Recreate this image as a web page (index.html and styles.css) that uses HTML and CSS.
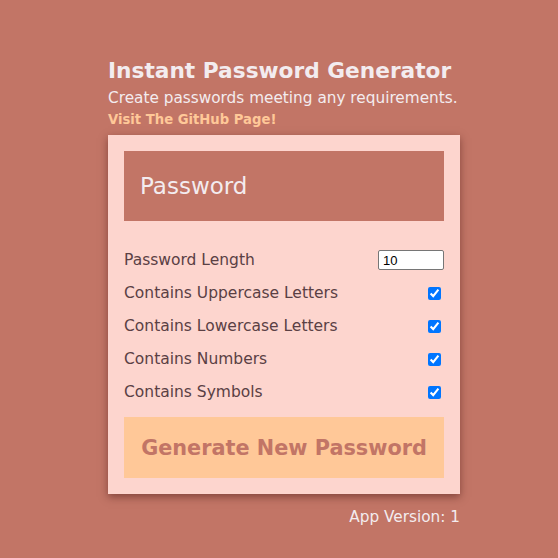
FILE: index.html
```html
<!DOCTYPE html>
<html>
<head>
<meta charset="utf-8">
<link rel="stylesheet" href="styles.css">
</head>
<body>
<main class="app">
  <header class="head">
    <h1 class="title">Instant Password Generator</h1>
    <p class="sub">Create passwords meeting any requirements.</p>
    <a class="link" href="#">Visit The GitHub Page!</a>
  </header>
  <section class="card">
    <div class="output">Password</div>
    <div class="opts">
      <label class="row"><span>Password Length</span><input class="num" type="number" value="10"></label>
      <label class="row"><span>Contains Uppercase Letters</span><input class="chk" type="checkbox" checked></label>
      <label class="row"><span>Contains Lowercase Letters</span><input class="chk" type="checkbox" checked></label>
      <label class="row"><span>Contains Numbers</span><input class="chk" type="checkbox" checked></label>
      <label class="row"><span>Contains Symbols</span><input class="chk" type="checkbox" checked></label>
    </div>
    <button class="gen">Generate New Password</button>
  </section>
  <p class="ver">App Version: 1</p>
</main>
</body>
</html>
```
FILE: styles.css
```css
html, body {
  margin: 0;
  background: #c27566;
  height: 100%;
}
body {
  font-family: "DejaVu Sans", sans-serif;
}
.app {
  width: 352px;
  margin-left: 108px;
  padding-top: 56px;
  display: flex;
  flex-direction: column;
}
.head {
  display: flex;
  flex-direction: column;
}
.title {
  margin: 0;
  font-size: 21.7px;
  font-weight: bold;
  color: #f3ecef;
  line-height: 30px;
  white-space: nowrap;
}
.sub {
  margin: 2px 0 0;
  font-size: 15.3px;
  color: #f3ecef;
  line-height: 20px;
  white-space: nowrap;
}
.link {
  margin-top: 2px;
  font-size: 13.2px;
  font-weight: bold;
  color: #ffc898;
  text-decoration: none;
  line-height: 20px;
}
.card {
  margin-top: 5px;
  background: #fdd5ce;
  padding: 16px;
  box-shadow: 0 3px 8px rgba(80, 30, 25, 0.55);
  display: flex;
  flex-direction: column;
}
.output {
  height: 70px;
  background: #c27566;
  color: #f3ecef;
  font-size: 23px;
  display: flex;
  align-items: center;
  padding-left: 16px;
}
.opts {
  margin-top: 29px;
  display: flex;
  flex-direction: column;
  gap: 13px;
}
.row {
  display: flex;
  justify-content: space-between;
  align-items: center;
  height: 20px;
  font-size: 15.5px;
  color: #5a4044;
}
.num {
  width: 66px;
  height: 20px;
  box-sizing: border-box;
  margin: 0;
  border: 1px solid #767676;
  border-radius: 2px;
  padding: 1px 4px;
  font-family: "Liberation Sans", sans-serif;
  font-size: 13px;
  background: #fff;
  -moz-appearance: textfield;
}
.num::-webkit-inner-spin-button,
.num::-webkit-outer-spin-button {
  -webkit-appearance: none;
  margin: 0;
}
.chk {
  width: 13px;
  height: 13px;
  margin: 0 3px 0 0;
  accent-color: #0075ff;
}
.gen {
  margin-top: 15px;
  height: 61px;
  border: none;
  background: #ffc898;
  color: #c27566;
  font-family: "DejaVu Sans", sans-serif;
  font-weight: bold;
  font-size: 20.8px;
}
.ver {
  margin: 14px 0 0;
  text-align: right;
  font-size: 15.3px;
  color: #f3ecef;
}
```
